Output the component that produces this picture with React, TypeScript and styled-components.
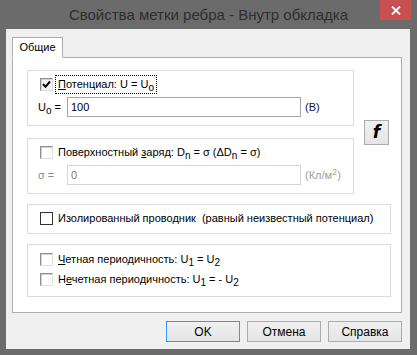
import styled, { createGlobalStyle } from 'styled-components';

const GlobalStyle = createGlobalStyle`
  html, body {
    margin: 0;
    padding: 0;
  }
  body {
    font-family: "Liberation Sans", Arial, sans-serif;
    font-size: 11px;
    color: #000;
  }
  * {
    box-sizing: border-box;
  }
`;

type CheckVariant = 'sunken' | 'flat';

function Check({ checked = false, variant = 'sunken' }: { checked?: boolean; variant?: CheckVariant }) {
	return (
		<CheckBox $variant={variant} $checked={checked}>
			{checked && (
				<svg width="9" height="9" viewBox="0 0 9 9">
					<path d="M1 4 L3.5 6.8 L8 1.5" fill="none" stroke="#000" strokeWidth="2" />
				</svg>
			)}
		</CheckBox>
	);
}

function App() {
	return (
		<>
			<GlobalStyle />
			<Window>
				<TitleBar>
					<Title>Свойства метки ребра - Внутр обкладка</Title>
					<CloseButton>
						<svg width="10" height="9" viewBox="0 0 10 9">
							<path d="M1 0.5 L9 8.5 M9 0.5 L1 8.5" stroke="#fff" strokeWidth="1.8" />
						</svg>
					</CloseButton>
				</TitleBar>
				<Client>
					<TabStrip>
						<Tab>Общие</Tab>
					</TabStrip>
					<Panel>
						<TopRow>
							<Groups>
								<Group $pad="4px 0 8px 10px">
									<CheckRow>
										<Check checked />
										<Focused>
											<u>П</u>отенциал: U = U<Sub>o</Sub>
										</Focused>
									</CheckRow>
									<FieldRow $gap={3}>
										<FieldLabel>
											U<Sub>o</Sub> =
										</FieldLabel>
										<Input>100</Input>
										<Unit>(В)</Unit>
									</FieldRow>
								</Group>
								<Group $pad="4px 0 8px 10px">
									<CheckRow>
										<Check />
										<Label>
											Поверхностный <u>з</u>аряд: D<Sub>n</Sub> = σ (ΔD<Sub>n</Sub> = σ)
										</Label>
									</CheckRow>
									<FieldRow $gap={3}>
										<FieldLabel $disabled>σ =</FieldLabel>
										<Input $disabled>0</Input>
										<Unit $disabled>
											(Кл/м<Sup>2</Sup>)
										</Unit>
									</FieldRow>
								</Group>
							</Groups>
							<FButton>f</FButton>
						</TopRow>
						<Group $pad="4px 0 5px 10px">
							<CheckRow>
								<Check variant="flat" />
								<Label>Изолированный проводник  (равный неизвестный потенциал)</Label>
							</CheckRow>
						</Group>
						<Group $pad="5px 0 7px 10px" $gap={1}>
							<CheckRow>
								<Check />
								<Label>
									<u>Ч</u>етная периодичность: U<Sub>1</Sub> = U<Sub>2</Sub>
								</Label>
							</CheckRow>
							<CheckRow>
								<Check />
								<Label>
									Н<u>е</u>четная периодичность: U<Sub>1</Sub> = - U<Sub>2</Sub>
								</Label>
							</CheckRow>
						</Group>
					</Panel>
					<ButtonBar>
						<DialogButton $primary>OK</DialogButton>
						<DialogButton>Отмена</DialogButton>
						<DialogButton>Справка</DialogButton>
					</ButtonBar>
				</Client>
			</Window>
		</>
	);
}

export default App;

const Window = styled.div`
	width: 417px;
	height: 355px;
	background-color: #6b6b6b;
	display: flex;
	flex-direction: column;
`;

const TitleBar = styled.div`
	height: 29px;
	display: grid;
	grid-template-columns: 37px 1fr 37px;
	align-items: start;
`;

const Title = styled.div`
	grid-column: 2;
	text-align: center;
	font-size: 15px;
	line-height: 29px;
	color: #2e2e2e;
	white-space: nowrap;
`;

const CloseButton = styled.div`
	grid-column: 3;
	width: 31px;
	height: 20px;
	background-color: #c75050;
	display: flex;
	align-items: center;
	justify-content: center;
`;

const Client = styled.div`
	flex: 1;
	margin: 0 7px 6px 6px;
	padding: 8px 8px 7px 6px;
	background-color: #f0f0f0;
	display: flex;
	flex-direction: column;
`;

const TabStrip = styled.div`
	display: flex;
`;

const Tab = styled.div`
	position: relative;
	z-index: 1;
	width: 51px;
	height: 21px;
	margin-bottom: -1px;
	border: 1px solid #adadad;
	border-bottom: 1px solid #fff;
	background-color: #fff;
	text-align: center;
	line-height: 18px;
	font-size: 11px;
`;

const Panel = styled.div`
	height: 256px;
	border: 1px solid #adadad;
	background-color: #fff;
	padding: 12px 10px 0 14px;
	display: flex;
	flex-direction: column;
	gap: 10px;
`;

const TopRow = styled.div`
	display: flex;
	align-items: center;
`;

const Groups = styled.div`
	width: 327px;
	display: flex;
	flex-direction: column;
	gap: 12px;
`;

const Group = styled.div<{ $pad: string; $gap?: number }>`
	border: 1px solid #dcdcdc;
	padding: ${(p) => p.$pad};
	display: flex;
	flex-direction: column;
	gap: ${(p) => p.$gap ?? 3}px;
`;

const CheckRow = styled.div`
	height: 19px;
	padding-left: 2px;
	display: flex;
	align-items: center;
	gap: 3px;
`;

const CheckBox = styled.div<{ $variant: CheckVariant; $checked: boolean }>`
	width: 13px;
	height: 13px;
	flex-shrink: 0;
	display: flex;
	align-items: center;
	justify-content: center;
	background-color: ${(p) => (p.$checked ? '#f4f4f4' : '#fff')};
	border: 1px solid;
	border-color: ${(p) => (p.$variant === 'flat' ? '#333' : '#8d8d8d #dedede #dedede #8d8d8d')};
	box-shadow: ${(p) => (p.$variant === 'flat' ? 'none' : 'inset 1px 1px #d4d4d4')};
`;

const Label = styled.span`
	white-space: pre;
	line-height: 17px;
	padding: 0 2px;
`;

const Focused = styled(Label)`
	outline: 1px dotted #000;
	outline-offset: 0;
	padding: 0 2px;
`;

const Sub = styled.sub`
	font-size: 10px;
	vertical-align: -3px;
	line-height: 0;
`;

const Sup = styled.sup`
	font-size: 9px;
	vertical-align: 4px;
	line-height: 0;
`;

const FieldRow = styled.div<{ $gap: number }>`
	display: flex;
	align-items: center;
`;

const FieldLabel = styled.span<{ $disabled?: boolean }>`
	width: 29px;
	white-space: nowrap;
	color: ${(p) => (p.$disabled ? '#8c8c8c' : '#000')};
`;

const Input = styled.div<{ $disabled?: boolean }>`
	width: 234px;
	height: 20px;
	border: 1px solid ${(p) => (p.$disabled ? '#d5d5d5' : '#a5a5a5')};
	background-color: #fff;
	padding-left: 3px;
	line-height: 18px;
	color: ${(p) => (p.$disabled ? '#7a7a7a' : '#000')};
`;

const Unit = styled.span<{ $disabled?: boolean }>`
	margin-left: 4px;
	white-space: nowrap;
	color: ${(p) => (p.$disabled ? '#a0a0a0' : '#10104a')};
`;

const FButton = styled.div`
	width: 25px;
	height: 25px;
	margin-left: 10px;
	border: 1px solid #acacac;
	background: linear-gradient(#f0f0f0, #e5e5e5);
	display: flex;
	align-items: center;
	justify-content: center;
	font-family: "DejaVu Sans", sans-serif;
	font-weight: 700;
	font-style: italic;
	font-size: 17px;
`;

const ButtonBar = styled.div`
	margin-top: 8px;
	display: flex;
	justify-content: flex-end;
	gap: 7px;
`;

const DialogButton = styled.div<{ $primary?: boolean }>`
	width: 74px;
	height: 21px;
	border: 1px solid ${(p) => (p.$primary ? '#3399ff' : '#acacac')};
	background: linear-gradient(#f0f0f0, #e5e5e5);
	display: flex;
	align-items: center;
	justify-content: center;
	font-size: 12px;
`;
